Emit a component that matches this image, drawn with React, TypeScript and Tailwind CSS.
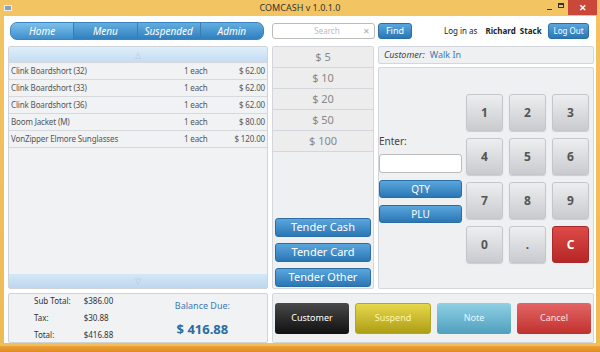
import React from "react";

const items = [
  ["Clink Boardshort (32)", "1 each", "$ 62.00"],
  ["Clink Boardshort (33)", "1 each", "$ 62.00"],
  ["Clink Boardshort (36)", "1 each", "$ 62.00"],
  ["Boom Jacket (M)", "1 each", "$ 80.00"],
  ["VonZipper Elmore Sunglasses", "1 each", "$ 120.00"],
];

const keyBtn =
  "w-[37px] h-[37px] rounded-[3px] border border-[#c4c6c9] bg-gradient-to-b from-[#eceef0] to-[#c9cbce] flex items-center justify-center text-[12px] font-bold text-[#555] shadow-[0_1px_1px_rgba(0,0,0,0.15)]";

const blueBtn =
  "rounded-[3px] bg-gradient-to-b from-[#5aa6dc] to-[#2a77b6] border border-[#2c6ea3] text-white flex items-center justify-center";

export default function App() {
  return (
    <div
      className="w-[600px] h-[352px] bg-gradient-to-b from-[#f2c462] to-[#eebc55] flex flex-col overflow-hidden"
      style={{ fontFamily: '"Noto Sans", "Open Sans", sans-serif' }}
    >
      {/* Title bar */}
      <div className="h-[16px] flex items-center relative shrink-0">
        <div className="ml-[4px] w-[8px] h-[6px] bg-[#8aa0c0] border border-[#eee]" />
        <div className="absolute left-0 right-0 top-[1px] text-center text-[9px] text-[#333] leading-[14px]">
          COMCASH v 1.0.1.0
        </div>
        <div className="ml-auto flex items-start h-full">
          <div className="w-[10px] flex justify-center items-end h-[10px]">
            <div className="w-[5px] h-[1px] bg-[#333]" />
          </div>
          <div className="w-[14px] flex justify-center items-center h-[10px]">
            <div className="w-[6px] h-[5px] border border-[#333] border-t-2" />
          </div>
          <div className="w-[29px] h-[15px] bg-[#c9483a] flex items-center justify-center text-white text-[9px] font-bold mr-[3px]">
            ✕
          </div>
        </div>
      </div>
      {/* Client */}
      <div className="mx-[4px] h-[327px] bg-white flex flex-col pl-[4px] pr-[2px] pt-[6px] shrink-0">
        {/* Top row */}
        <div className="flex items-center h-[18px]">
          <div className="w-[254px] ml-[2px] h-[18px] rounded-[7px] bg-gradient-to-b from-[#62aee0] to-[#2f7fbf] flex text-white italic text-[10px] overflow-hidden border border-[#3c84bd]">
            <div className="flex-1 flex items-center justify-center bg-gradient-to-b from-[#7cc0ea] to-[#3d8fcc] border-r border-[#3a7db5]">Home</div>
            <div className="flex-1 flex items-center justify-center border-r border-[#3a7db5]">Menu</div>
            <div className="flex-1 flex items-center justify-center border-r border-[#3a7db5]">Suspended</div>
            <div className="flex-1 flex items-center justify-center">Admin</div>
          </div>
          <div className="ml-[8px] w-[103px] h-[16px] border border-[#bbb] rounded-[3px] flex items-center text-[8px] text-[#bbb] px-[4px]">
            <span className="flex-1 text-center pl-[14px]">Search</span>
            <span className="text-[#aaa] text-[8px]">✕</span>
          </div>
          <div className={blueBtn + " ml-[3px] w-[34px] h-[16px] text-[9px]"}>Find</div>
          <div className="ml-[32px] text-[8px] text-[#222] flex gap-[8px]">
            <span>Log in as</span>
            <span className="font-bold">Richard&nbsp; Stack</span>
          </div>
          <div className={blueBtn + " ml-auto mr-[5px] w-[41px] h-[16px] text-[8px]"}>Log Out</div>
        </div>
        {/* Main */}
        <div className="flex gap-[4px] mt-[6px] h-[244px]">
          {/* list */}
          <div className="w-[260px] border border-[#cfd3d8] rounded-[2px] bg-[#f1f2f4] flex flex-col">
            <div className="h-[15px] bg-gradient-to-b from-[#dfeefa] to-[#c3ddf2] flex items-center justify-center text-[8px] text-[#b8c8d8]">△</div>
            {items.map((r, i) => (
              <div key={i} className="h-[17px] flex items-center border-t border-[#d6d8db] text-[8px] tracking-[-0.15px] text-[#555] px-[2px]">
                <span className="flex-1">{r[0]}</span>
                <span className="w-[41px]">{r[1]}</span>
                <span className="w-[40px] text-right">{r[2]}</span>
              </div>
            ))}
            <div className="flex-1 border-t border-[#d6d8db]" />
            <div className="h-[14px] bg-gradient-to-b from-[#d4e7f6] to-[#bcd8ef] flex items-center justify-center text-[8px] text-[#b8c8d8]">▽</div>
          </div>
          {/* tender */}
          <div className="w-[102px] border border-[#d3d6da] rounded-[2px] bg-[#eff0f2] flex flex-col">
            {["$ 5", "$ 10", "$ 20", "$ 50", "$ 100"].map((t) => (
              <div key={t} className="h-[21px] border-b border-[#d3d6da] bg-[#ededed] flex items-center justify-center text-[11px] text-[#888]">
                {t}
              </div>
            ))}
            <div className="flex-1" />
            <div className="flex flex-col gap-[6px] px-[2px] pb-[1px]">
              <div className={blueBtn + " h-[19px] text-[11px]"}>Tender Cash</div>
              <div className={blueBtn + " h-[19px] text-[11px]"}>Tender Card</div>
              <div className={blueBtn + " h-[19px] text-[11px]"}>Tender Other</div>
            </div>
          </div>
          {/* right */}
          <div className="flex-1 flex flex-col gap-[3px]">
            <div className="h-[18px] border border-[#d3d6da] rounded-[2px] bg-[#eff0f2] flex items-center px-[5px] text-[9px]">
              <span className="italic text-[#444]">Customer:</span>
              <span className="ml-[5px] text-[#3d7ab0]">Walk In</span>
            </div>
            <div className="flex-1 border border-[#d3d6da] rounded-[2px] bg-[#eff0f2] flex pl-0 pr-[4px]">
              <div className="w-[83px] flex flex-col pt-[66px]">
                <div className="text-[10px] text-[#444] h-[14px] leading-[14px]">Enter:</div>
                <div className="mt-[6px] h-[19px] border border-[#bbb] rounded-[3px] bg-white" />
                <div className={blueBtn + " mt-[7px] h-[18px] text-[10px]"}>QTY</div>
                <div className={blueBtn + " mt-[7px] h-[18px] text-[10px]"}>PLU</div>
              </div>
              <div className="ml-auto pt-[26px] grid grid-cols-3 gap-x-[6px] gap-y-[7px] h-fit">
                {["1", "2", "3", "4", "5", "6", "7", "8", "9", "0", "."].map((k) => (
                  <div key={k} className={keyBtn}>{k}</div>
                ))}
                <div className="w-[37px] h-[37px] rounded-[3px] border border-[#a82a2a] bg-gradient-to-b from-[#de4a48] to-[#b52626] flex items-center justify-center text-[12px] font-bold text-white">
                  C
                </div>
              </div>
            </div>
          </div>
        </div>
        {/* bottom */}
        <div className="flex gap-[4px] mt-[4px] h-[50px]">
          <div className="w-[260px] border border-[#cfd3d8] rounded-[2px] bg-[#f1f2f4] flex items-center text-[8px] text-[#333]">
            <div className="ml-[25px] flex flex-col gap-[5px]">
              <span>Sub Total:</span>
              <span>Tax:</span>
              <span>Total:</span>
            </div>
            <div className="ml-[13px] flex flex-col gap-[5px]">
              <span>$386.00</span>
              <span>$30.88</span>
              <span>$416.88</span>
            </div>
            <div className="ml-auto mr-[37px] self-start pt-[6px] flex flex-col items-center">
              <span className="text-[9px] leading-[12px] text-[#3d7ab0]">Balance Due:</span>
              <span className="mt-[8px] text-[13px] leading-[18px] font-bold text-[#2d6c9f]">$ 416.88</span>
            </div>
          </div>
          <div className="flex-1 border border-[#d3d6da] rounded-[2px] bg-[#eff0f2] flex items-center gap-[6px] px-[2px] text-[9px]">
            <div className="flex-1 h-[31px] rounded-[3px] bg-gradient-to-b from-[#4a4a4a] to-[#111] flex items-center justify-center text-white">Customer</div>
            <div className="flex-1 h-[31px] rounded-[3px] bg-gradient-to-b from-[#e6d84a] to-[#ad9e12] border border-[#b3a520] flex items-center justify-center text-[#fff6b0]">Suspend</div>
            <div className="flex-1 h-[31px] rounded-[3px] bg-gradient-to-b from-[#8fd0e4] to-[#4f9fbe] flex items-center justify-center text-[#e6f6ff]">Note</div>
            <div className="flex-1 h-[31px] rounded-[3px] bg-gradient-to-b from-[#e46464] to-[#c0302e] flex items-center justify-center text-[#ffe0e0]">Cancel</div>
          </div>
        </div>
      </div>
      <div className="h-[3px] bg-[#efbf5a] shrink-0" />
      <div className="flex-1 bg-gradient-to-b from-[#eba238] to-[#e08a20]" />
    </div>
  );
}
